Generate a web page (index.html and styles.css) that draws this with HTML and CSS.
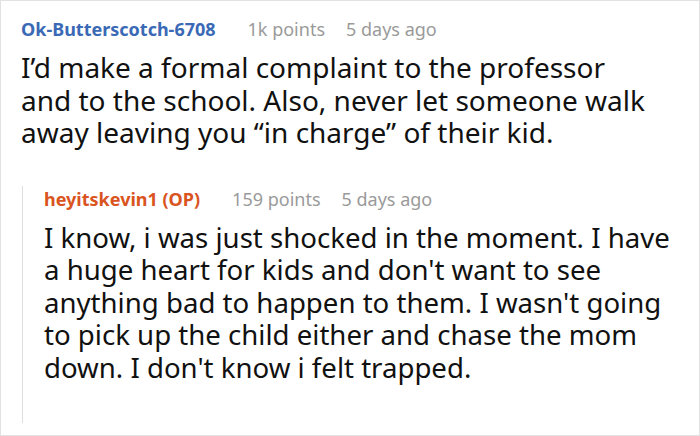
FILE: index.html
```html
<!DOCTYPE html>
<html>
<head>
<meta charset="utf-8">
<link rel="stylesheet" href="styles.css">
</head>
<body>
<div class="frame">
  <div class="comment">
    <div class="meta">
      <span class="user">Ok-Butterscotch-6708</span>
      <span class="info">1k points</span>
      <span class="info">5 days ago</span>
    </div>
    <p class="body body-main">I’d make a formal complaint to the professor<br>and to the school. Also, never let someone walk away leaving you “in charge” of their kid.</p>
    <div class="reply">
      <div class="meta">
        <span class="user op">heyitskevin1 (OP)</span>
        <span class="info">159 points</span>
        <span class="info">5 days ago</span>
      </div>
      <p class="body">I know, i was just shocked in the moment. I have a huge heart for kids and don't want to see anything bad to happen to them. I wasn't going to pick up the child either and chase the mom down. I don't know i felt trapped.</p>
    </div>
  </div>
</div>
</body>
</html>
```
FILE: styles.css
```css
html, body {
  margin: 0;
  padding: 0;
  background: #fff;
}
.frame {
  box-sizing: border-box;
  width: 700px;
  height: 436px;
  border: 1px solid #e2e2e2;
  padding: 15px 20px 0 20px;
  font-family: "Noto Sans", sans-serif;
  color: #111;
  overflow: hidden;
}
.meta {
  display: flex;
  align-items: baseline;
  line-height: 26px;
}
.user {
  font-weight: 700;
  font-size: 18px;
  color: #3a69b5;
  margin-right: 32px;
}
.user.op {
  color: #d9541e;
}
.info {
  font-size: 18px;
  color: #9a9a9a;
  margin-right: 21px;
}
.body {
  margin: 9px 0 0 0;
  font-size: 27.6px;
  line-height: 32.5px;
}
.body-main {
  font-size: 28px;
  max-width: 664px;
}
.reply {
  margin-top: 50px;
  margin-left: 1px;
  margin-right: 6px;
  border-left: 1px solid #dedede;
  padding: 0 0 40px 21px;
}
.reply .meta {
  margin-top: -13px;
}
```
